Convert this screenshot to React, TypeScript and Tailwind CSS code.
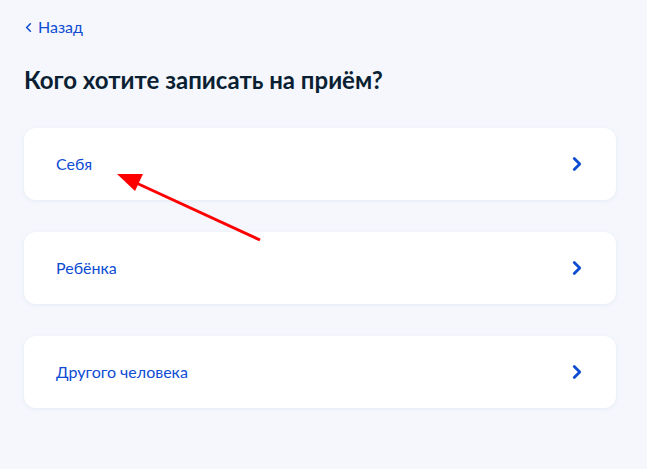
import { ChevronLeft, ChevronRight } from "lucide-react";

const options = ["Себя", "Ребёнка", "Другого человека"];

export default function App() {
  return (
    <div className="relative min-h-[469px] w-[647px] bg-[#f5f7fc] px-6 pt-[15px] font-['Lato','Liberation_Sans',sans-serif]">
      <button className="-ml-[3px] flex items-center gap-[2px] text-[16px] leading-6 text-[#0d4cd3]">
        <ChevronLeft className="h-[15px] w-[15px]" strokeWidth={2.5} />
        Назад
      </button>
      <h1 className="mt-[25px] text-[24px] font-bold leading-8 text-[#0b1f33]">
        Кого хотите записать на приём?
      </h1>
      <div className="mt-8 flex w-[592px] flex-col gap-8">
        {options.map((o) => (
          <div
            key={o}
            className="flex h-[72px] items-center justify-between rounded-xl bg-white pl-8 pr-[28px] shadow-[0_1px_4px_rgba(102,150,200,0.12)]"
          >
            <span className="text-[16px] text-[#0d4cd3]">{o}</span>
            <ChevronRight className="h-[22px] w-[22px] text-[#0d4cd3]" strokeWidth={3} />
          </div>
        ))}
      </div>
      <svg className="pointer-events-none absolute left-0 top-0" width="647" height="469">
        <line x1="260" y1="240" x2="132" y2="181" stroke="#f00" strokeWidth="3" />
        <polygon points="117,174 143,174 135,191" fill="#f00" />
      </svg>
    </div>
  );
}
